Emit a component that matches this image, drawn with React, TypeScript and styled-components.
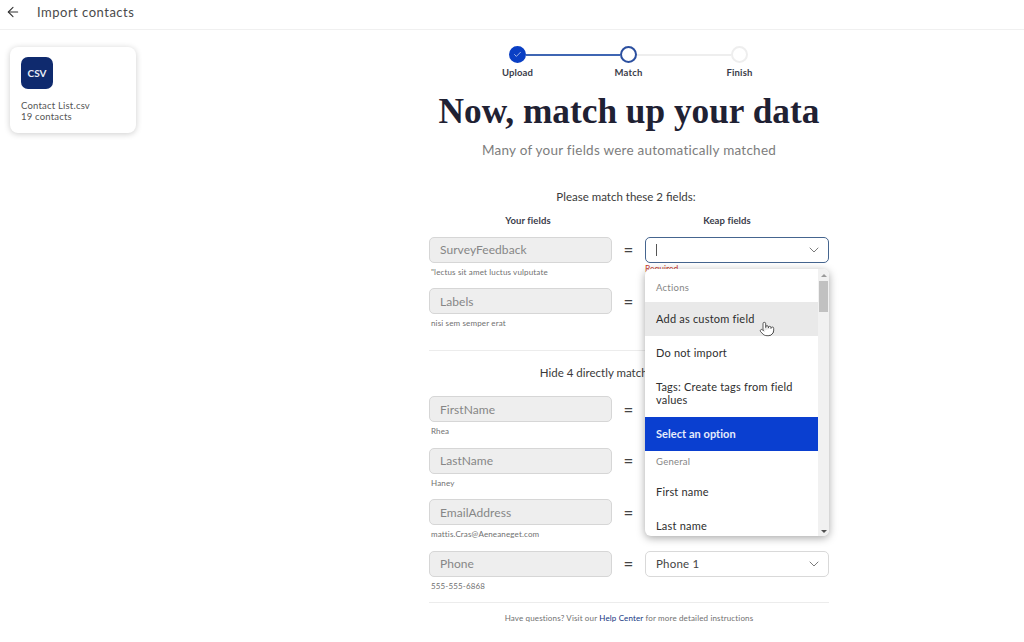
import styled, { createGlobalStyle } from 'styled-components';
import { ArrowLeft, Check, ChevronDown, Pointer } from 'lucide-react';

const GlobalStyle = createGlobalStyle`
    html, body {
        margin: 0;
        height: 100%;
        background: #fff;
        overflow: hidden;
    }
    * {
        box-sizing: border-box;
    }
    body {
        font-family: Lato, "Liberation Sans", sans-serif;
        color: #26283a;
    }
`;

const Header = styled.header`
    display: flex;
    align-items: center;
    gap: 16px;
    height: 30px;
    padding: 0 0 5px 5px;
    border-bottom: 1px solid #f0f0f0;
    font-size: 13px;
    letter-spacing: 0.5px;
    color: #4a4a4a;
`;

const Content = styled.div`
    display: grid;
    grid-template-columns: 429px 400px;
`;

const Sidebar = styled.aside`
    padding: 17px 0 0 10px;
`;

const FileCard = styled.div`
    width: 126px;
    height: 86px;
    padding: 10px 11px;
    border-radius: 8px;
    background: #fff;
    box-shadow: 0 1px 6px rgba(0, 0, 0, 0.2);
`;

const FileBadge = styled.div`
    display: flex;
    align-items: center;
    justify-content: center;
    width: 32px;
    height: 32px;
    margin-bottom: 11px;
    border-radius: 7px;
    background: #0f2a6e;
    color: #e8ecf6;
    font-size: 10px;
    font-weight: 700;
`;

const FileName = styled.div`
    font-size: 9.5px;
    line-height: 11px;
    letter-spacing: 0.2px;
    color: #555;
`;

const Main = styled.main`
    display: flex;
    flex-direction: column;
`;

const Stepper = styled.div`
    display: flex;
    flex-direction: column;
    align-items: center;
    padding: 16px 1px 0 0;
`;

const Track = styled.div`
    display: flex;
    align-items: center;
    width: 239px;
`;

const Dot = styled.div<{ $state: 'done' | 'active' | 'todo' }>`
    display: flex;
    align-items: center;
    justify-content: center;
    flex: none;
    width: 17px;
    height: 17px;
    border-radius: 50%;
    color: #cfd8f2;
    background: ${(p) => (p.$state === 'done' ? '#0a3fc4' : '#fff')};
    border: 2px solid ${(p) =>
        p.$state === 'done' ? '#0a3fc4' : p.$state === 'active' ? '#2b4f9f' : '#eeeeee'};
`;

const Line = styled.div<{ $on?: boolean }>`
    flex: 1;
    height: 2px;
    background: ${(p) => (p.$on ? '#3f66b3' : '#eeeeee')};
`;

const StepLabels = styled.div`
    display: grid;
    grid-template-columns: repeat(3, 111px);
    margin-top: 4px;
    font-size: 9.5px;
    font-weight: 700;
    line-height: 12px;
    letter-spacing: 0.15px;
    text-align: center;
    color: #3a3c4a;
`;

const Title = styled.h1`
    margin: 11px 0 0;
    font-family: "Liberation Serif", serif;
    font-size: 35.3px;
    font-weight: 700;
    line-height: 44px;
    text-align: center;
    color: #1f2133;
`;

const Subtitle = styled.p`
    margin: 7px 0 0;
    font-size: 13.5px;
    line-height: 18px;
    letter-spacing: 0.25px;
    text-align: center;
    color: #7d7d7d;
`;

const Prompt = styled.div`
    margin-top: 31px;
    padding-right: 6px;
    font-size: 11.5px;
    line-height: 14px;
    text-align: center;
    color: #3a3a3a;
`;

const ColumnHeads = styled.div`
    display: grid;
    grid-template-columns: 198px 200px;
    margin: 10.5px 0 10px;
    font-size: 9.5px;
    font-weight: 700;
    line-height: 12px;
    letter-spacing: 0.1px;
    text-align: center;
    color: #3a3c4a;
`;

const Row = styled.div`
    position: relative;
    display: grid;
    grid-template-columns: 183px 33px 184px;
    grid-template-rows: 26px 25.5px;
    align-items: center;
`;

const SourceField = styled.div`
    display: flex;
    align-items: center;
    height: 26px;
    padding-left: 10px;
    border: 1px solid #d6d6d6;
    border-radius: 5px;
    background: #eeeeee;
    font-size: 12px;
    letter-spacing: 0.05px;
    color: #868686;
`;

const Equals = styled.div`
    font-size: 17px;
    line-height: 25px;
    text-align: center;
    color: #444;
`;

const TargetSelect = styled.div<{ $focused?: boolean; $empty?: boolean }>`
    display: flex;
    align-items: center;
    justify-content: ${(p) => (p.$empty ? 'flex-end' : 'space-between')};
    height: 26px;
    padding: 0 6px 0 10px;
    border: 1px solid ${(p) => (p.$focused ? '#45658f' : '#d9d9d9')};
    border-radius: 5px;
    background: #fff;
    font-size: 11.5px;
    letter-spacing: 0.2px;
    color: #444;
`;

const Caret = styled.span`
    width: 1px;
    height: 12px;
    background: #555;
`;

const Sample = styled.div`
    align-self: start;
    padding: 4px 0 0 2px;
    font-size: 8px;
    line-height: 10px;
    letter-spacing: 0.15px;
    color: #707070;
`;

const ErrorText = styled.div`
    grid-column: 3;
    align-self: start;
    padding-top: 1px;
    font-size: 8.5px;
    line-height: 10px;
    color: #c8392b;
`;

const Divider = styled.hr<{ $flush?: boolean }>`
    width: 100%;
    margin: ${(p) => (p.$flush ? '0' : '10px 0 0')};
    border: 0;
    border-top: 1px solid #ececec;
`;

const HideToggle = styled.div`
    margin: 15.5px 0 16px;
    font-size: 11.5px;
    line-height: 14px;
    text-align: center;
    color: #3a3a3a;
`;

const FooterNote = styled.div`
    margin-top: 10px;
    font-size: 8px;
    line-height: 10px;
    letter-spacing: 0.15px;
    text-align: center;
    color: #707070;
`;

const HelpLink = styled.span`
    color: #14357f;
`;

const Menu = styled.div`
    position: absolute;
    top: 32px;
    left: 216px;
    z-index: 2;
    display: flex;
    width: 184px;
    height: 267px;
    overflow: hidden;
    border-radius: 6px;
    background: #fff;
    box-shadow: 0 2px 8px rgba(0, 0, 0, 0.35);
`;

const MenuList = styled.div`
    flex: 1;
    min-width: 0;
    overflow: hidden;
`;

const MenuHeading = styled.div<{ $first?: boolean }>`
    padding: ${(p) => (p.$first ? '13px 11px 8px' : '5px 11px 7px')};
    font-size: 9.5px;
    line-height: 12px;
    letter-spacing: 0.25px;
    color: #858585;
`;

const MenuItem = styled.div<{ $hover?: boolean; $selected?: boolean }>`
    padding: 10px 11px 11px;
    font-size: 11px;
    line-height: 13px;
    letter-spacing: ${(p) => (p.$selected ? '0.05px' : '0.2px')};
    font-weight: ${(p) => (p.$selected ? 700 : 400)};
    color: ${(p) => (p.$selected ? '#e6ecfb' : '#2e2e2e')};
    background: ${(p) => (p.$selected ? '#0a3fd0' : p.$hover ? '#e9e9e9' : 'transparent')};
`;

const ScrollTrack = styled.div`
    display: flex;
    flex: none;
    flex-direction: column;
    align-items: center;
    justify-content: space-between;
    width: 11px;
    padding: 5px 0 3px;
    background: #f1f1f1;
`;

const ScrollThumb = styled.div`
    width: 9px;
    height: 31px;
    margin: 4px 0 auto;
    background: #c1c1c1;
`;

const ScrollArrow = styled.div<{ $down?: boolean }>`
    width: 0;
    height: 0;
    border-left: 3px solid transparent;
    border-right: 3px solid transparent;
    border-bottom: ${(p) => (p.$down ? '0' : '3px solid #9a9a9a')};
    border-top: ${(p) => (p.$down ? '3px solid #505050' : '0')};
`;

const HandCursor = styled(Pointer)`
    position: absolute;
    top: 52px;
    left: 114px;
    fill: #fff;
    color: #333;
`;

const SelectChevron = () => <ChevronDown size={16} strokeWidth={1.3} color="#666" />;

const mappedRows = [
    { name: 'FirstName', sample: 'Rhea', target: 'First name' },
    { name: 'LastName', sample: 'Haney', target: 'Last name' },
    { name: 'EmailAddress', sample: 'mattis.Cras@Aeneaneget.com', target: 'Email' },
    { name: 'Phone', sample: '555-555-6868', target: 'Phone 1' },
];

export default function App() {
    return (
        <>
            <GlobalStyle />
            <Header>
                <ArrowLeft size={16} strokeWidth={1.6} color="#333" />
                Import contacts
            </Header>
            <Content>
                <Sidebar>
                    <FileCard>
                        <FileBadge>CSV</FileBadge>
                        <FileName>Contact List.csv</FileName>
                        <FileName>19 contacts</FileName>
                    </FileCard>
                </Sidebar>
                <Main>
                    <Stepper>
                        <Track>
                            <Dot $state="done">
                                <Check size={9} strokeWidth={2} />
                            </Dot>
                            <Line $on />
                            <Dot $state="active" />
                            <Line />
                            <Dot $state="todo" />
                        </Track>
                        <StepLabels>
                            <span>Upload</span>
                            <span>Match</span>
                            <span>Finish</span>
                        </StepLabels>
                    </Stepper>
                    <Title>Now, match up your data</Title>
                    <Subtitle>Many of your fields were automatically matched</Subtitle>
                    <Prompt>Please match these 2 fields:</Prompt>
                    <ColumnHeads>
                        <span>Your fields</span>
                        <span>Keap fields</span>
                    </ColumnHeads>
                    <Row>
                        <SourceField>SurveyFeedback</SourceField>
                        <Equals>=</Equals>
                        <TargetSelect $focused>
                            <Caret />
                            <SelectChevron />
                        </TargetSelect>
                        <Sample>"lectus sit amet luctus vulputate</Sample>
                        <ErrorText>Required</ErrorText>
                        <Menu>
                            <MenuList>
                                <MenuHeading $first>Actions</MenuHeading>
                                <MenuItem $hover>Add as custom field</MenuItem>
                                <MenuItem>Do not import</MenuItem>
                                <MenuItem>Tags: Create tags from field values</MenuItem>
                                <MenuItem $selected>Select an option</MenuItem>
                                <MenuHeading>General</MenuHeading>
                                <MenuItem>First name</MenuItem>
                                <MenuItem>Last name</MenuItem>
                            </MenuList>
                            <ScrollTrack>
                                <ScrollArrow />
                                <ScrollThumb />
                                <ScrollArrow $down />
                            </ScrollTrack>
                            <HandCursor size={16} strokeWidth={1.2} />
                        </Menu>
                    </Row>
                    <Row>
                        <SourceField>Labels</SourceField>
                        <Equals>=</Equals>
                        <TargetSelect $empty>
                            <SelectChevron />
                        </TargetSelect>
                        <Sample>nisi sem semper erat</Sample>
                    </Row>
                    <Divider />
                    <HideToggle>Hide 4 directly matched Keap fields</HideToggle>
                    {mappedRows.map((row) => (
                        <Row key={row.name}>
                            <SourceField>{row.name}</SourceField>
                            <Equals>=</Equals>
                            <TargetSelect>
                                {row.target}
                                <SelectChevron />
                            </TargetSelect>
                            <Sample>{row.sample}</Sample>
                        </Row>
                    ))}
                    <Divider $flush />
                    <FooterNote>
                        Have questions? Visit our <HelpLink>Help Center</HelpLink> for more detailed instructions
                    </FooterNote>
                </Main>
            </Content>
        </>
    );
}
